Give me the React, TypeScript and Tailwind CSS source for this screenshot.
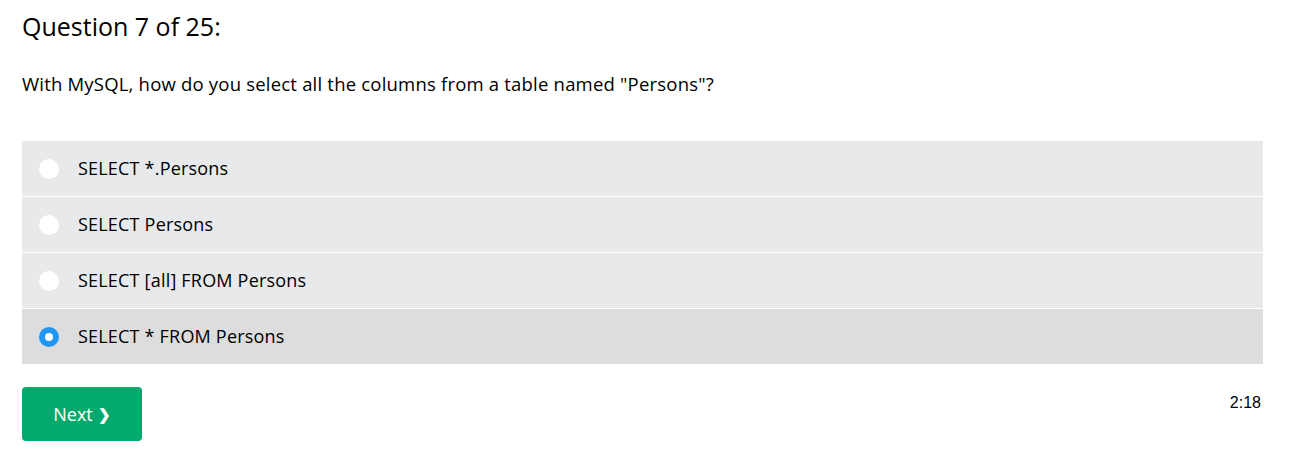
import React, { useState } from 'react';

const options = [
  'SELECT *.Persons',
  'SELECT Persons',
  'SELECT [all] FROM Persons',
  'SELECT * FROM Persons',
];

export default function App() {
  const [selected, setSelected] = useState(3);

  return (
    <div
      className="min-h-[462px] bg-white px-[22px] pt-[10px] text-black"
      style={{ fontFamily: '"Open Sans", "Noto Sans", sans-serif' }}
    >
      <h2 className="text-[25px] leading-[32px]">Question 7 of 25:</h2>
      <p className="mt-[28px] text-[18.5px] leading-[28px] tracking-[0.2px]">
        With MySQL, how do you select all the columns from a table named "Persons"?
      </p>

      <div className="mt-[43px] mr-[10px] flex flex-col gap-px">
        {options.map((opt, i) => (
          <label
            key={opt}
            onClick={() => setSelected(i)}
            className={`flex h-[55px] cursor-pointer items-center pl-[17px] ${
              selected === i ? 'bg-[#dddddd]' : 'bg-[#e7e9eb]'
            }`}
          >
            {selected === i ? (
              <span className="flex h-[20px] w-[20px] items-center justify-center rounded-full bg-[#2196f3]">
                <span className="h-[8px] w-[8px] rounded-full bg-white" />
              </span>
            ) : (
              <span className="h-[20px] w-[20px] rounded-full bg-white" />
            )}
            <span className="ml-[19px] text-[18px] tracking-[0.2px]">{opt}</span>
          </label>
        ))}
      </div>

      <div className="mt-[23px] mr-[10px] flex items-start justify-between">
        <button className="flex h-[54px] w-[120px] items-center justify-center rounded-[4px] bg-[#04aa6d] text-[18px] text-white">
          Next <span className="ml-[5px] text-[15px] font-bold">❯</span>
        </button>
        <span
          className="mt-[4px] mr-[2px] text-[16px]"
          style={{ fontFamily: '"Liberation Sans", Arial, sans-serif' }}
        >
          2:18
        </span>
      </div>
    </div>
  );
}
